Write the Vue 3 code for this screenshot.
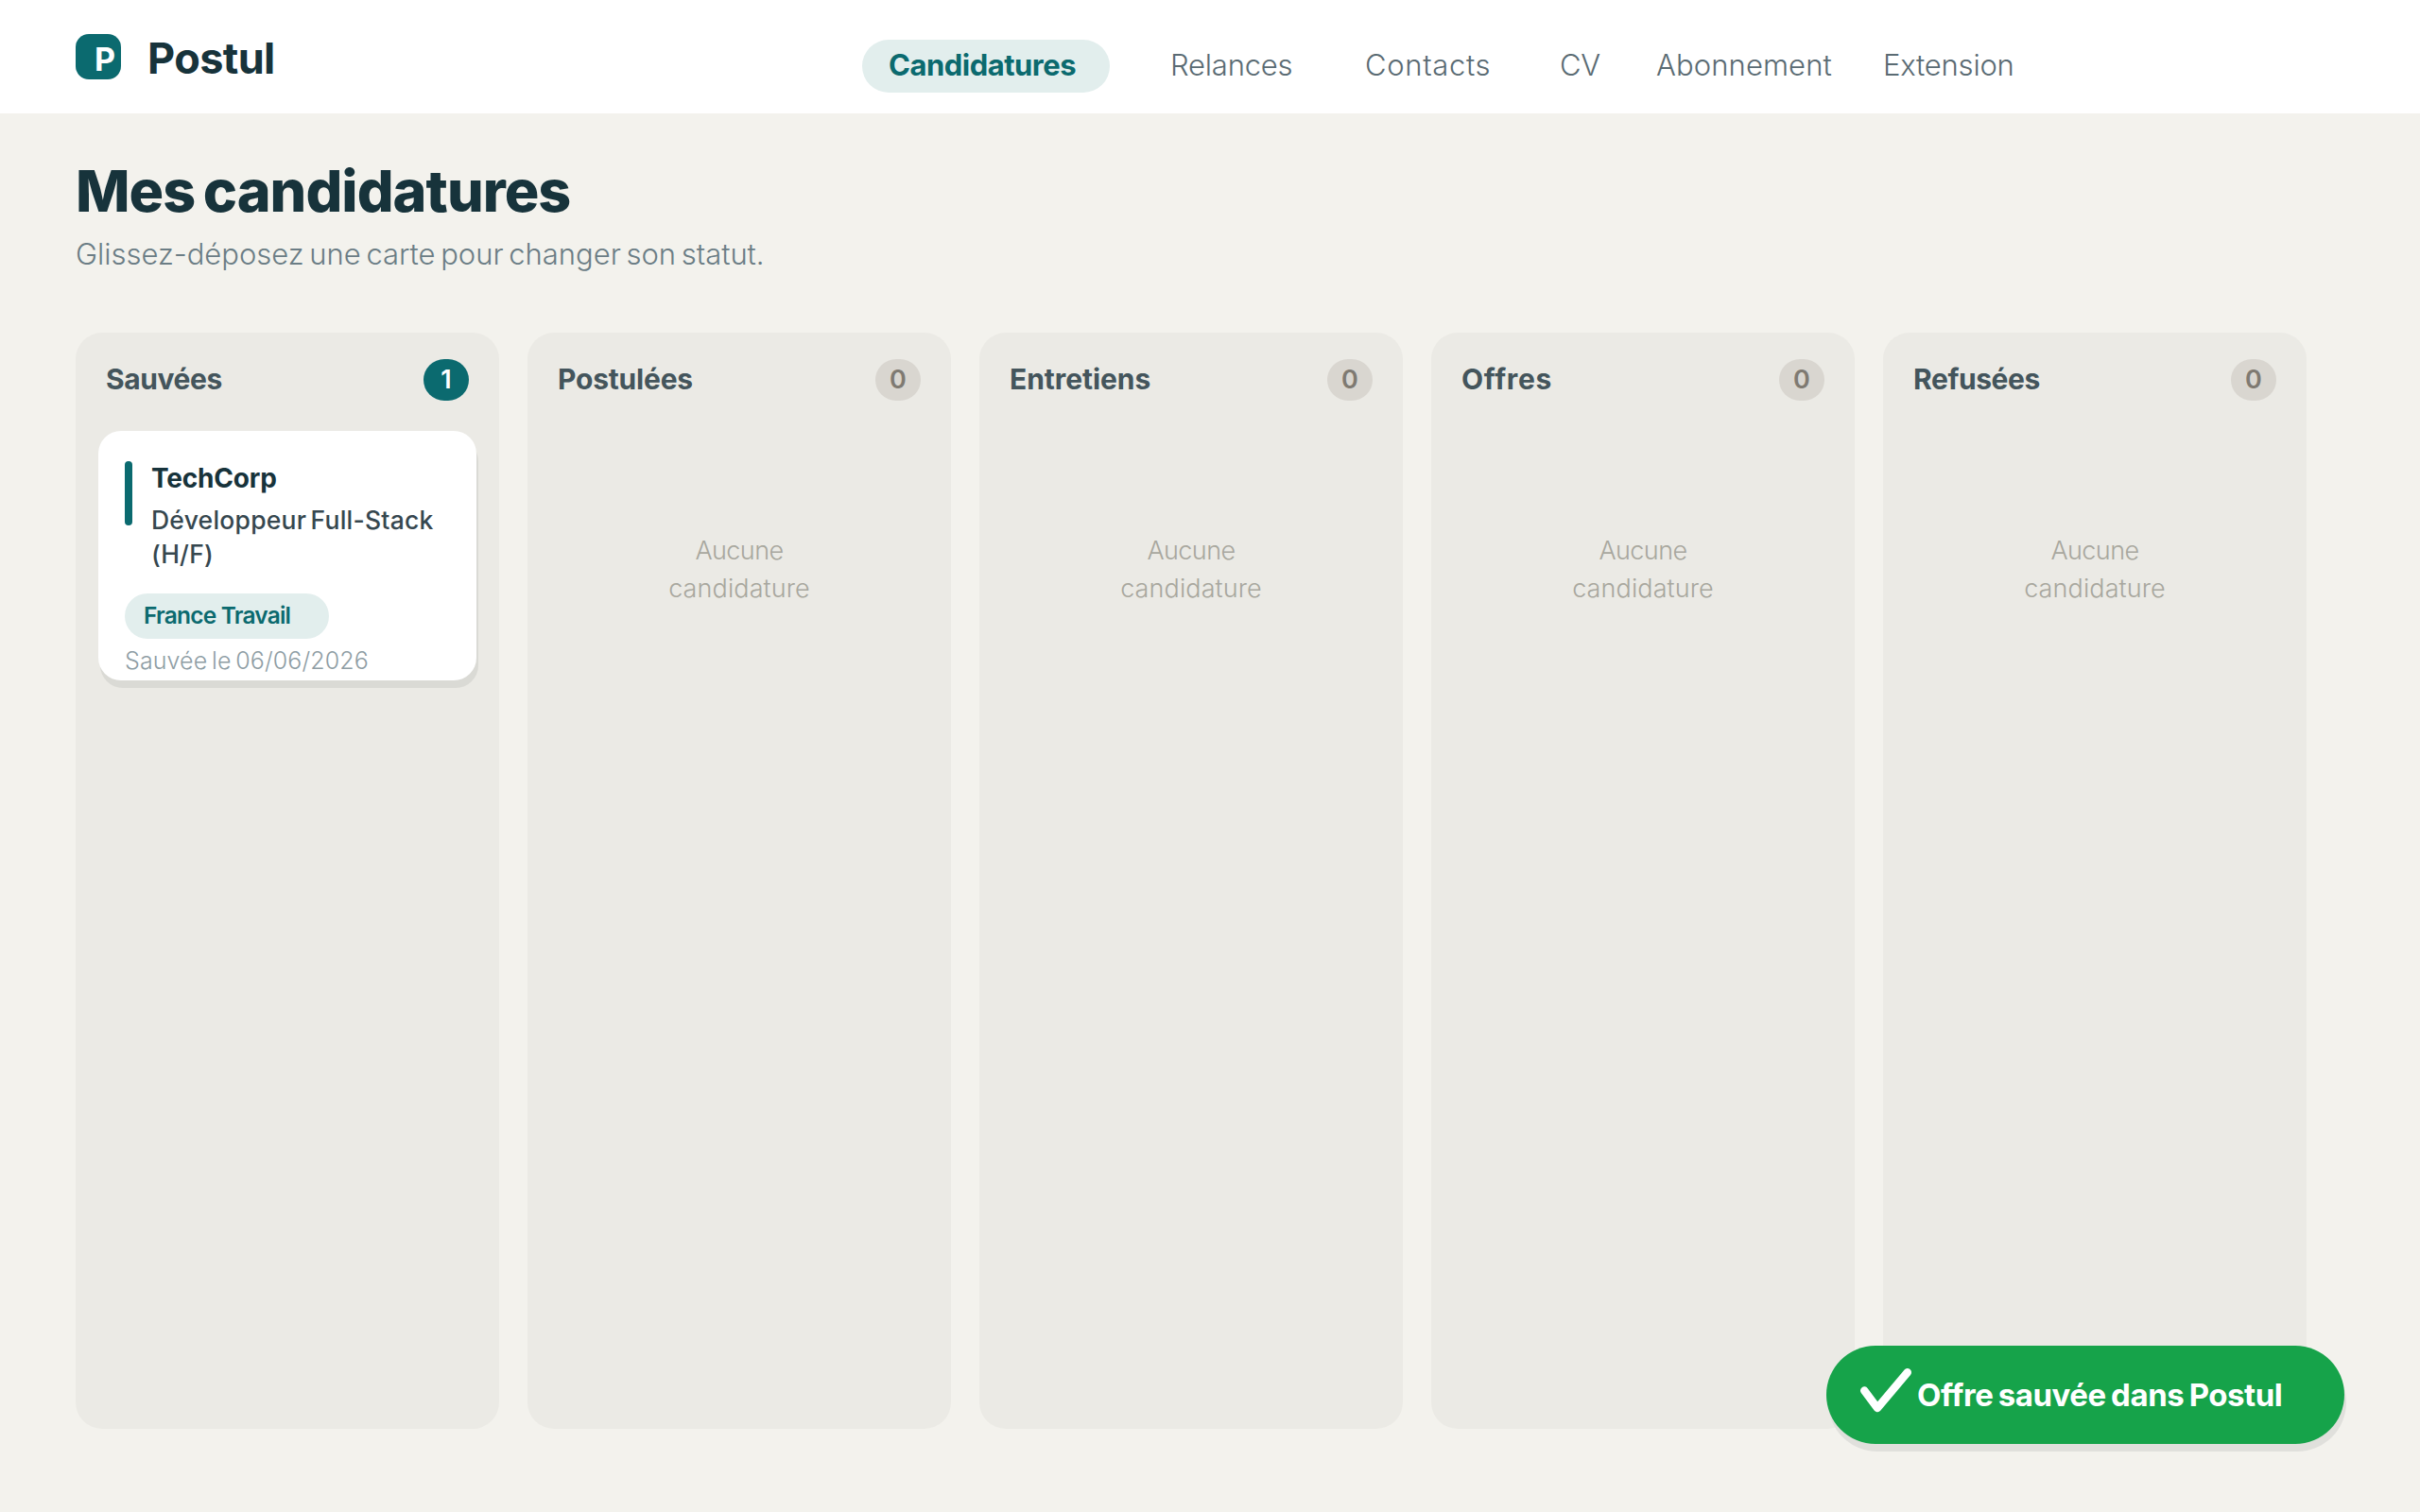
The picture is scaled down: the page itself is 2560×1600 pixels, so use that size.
<template>
  <div class="app">
    <header class="topbar">
      <div class="brand">
        <span class="brand-logo">P</span>
        <span class="brand-name">Postul</span>
      </div>
      <nav class="nav">
        <a v-for="link in links" :key="link.id" class="nav-link" :class="[link.id, { active: link.id === current }]" @click="current = link.id">{{ link.label }}</a>
      </nav>
    </header>

    <main class="content">
      <h1 class="title">Mes candidatures</h1>
      <p class="subtitle">Glissez-déposez une carte pour changer son statut.</p>

      <div class="board">
        <section v-for="column in columns" :key="column.id" class="column">
          <div class="column-head">
            <h2 class="column-title" :class="column.id">{{ column.label }}</h2>
            <span class="count" :class="{ filled: column.cards.length > 0 }">{{ column.cards.length }}</span>
          </div>
          <article v-for="card in column.cards" :key="card.company" class="card">
            <div class="card-main">
              <span class="card-bar"></span>
              <div>
                <div class="card-company">{{ card.company }}</div>
                <div class="card-role">{{ card.role }}</div>
              </div>
            </div>
            <span class="card-source">{{ card.source }}</span>
            <div class="card-date">Sauvée le {{ card.savedAt }}</div>
          </article>
          <p v-if="column.cards.length === 0" class="empty">Aucune<br><span class="empty-word">candidature</span></p>
        </section>
      </div>
    </main>

    <div class="toast">
      <svg class="toast-icon" width="56" height="50" viewBox="0 0 56 50">
        <path d="M5.2 25.5 L19 44 L50.8 6.2" fill="none" stroke="#fff" stroke-width="8.4" stroke-linecap="round" stroke-linejoin="round" />
      </svg>
      <span class="toast-text">Offre sauvée dans Postul</span>
    </div>
  </div>
</template>

<script setup>
import { ref } from "vue";

const current = ref("candidatures");

const links = [
  { id: "candidatures", label: "Candidatures" },
  { id: "relances", label: "Relances" },
  { id: "contacts", label: "Contacts" },
  { id: "cv", label: "CV" },
  { id: "abonnement", label: "Abonnement" },
  { id: "extension", label: "Extension" },
];

const columns = ref([
  {
    id: "sauvees",
    label: "Sauvées",
    cards: [
      {
        company: "TechCorp",
        role: "Développeur Full-Stack (H/F)",
        source: "France Travail",
        savedAt: "06/06/2026",
      },
    ],
  },
  { id: "postulees", label: "Postulées", cards: [] },
  { id: "entretiens", label: "Entretiens", cards: [] },
  { id: "offres", label: "Offres", cards: [] },
  { id: "refusees", label: "Refusées", cards: [] },
]);
</script>

<style>
body {
  margin: 0;
  background: #f3f2ed;
}
</style>

<style scoped>
.app {
  width: 2560px;
  height: 1600px;
  overflow: hidden;
  background: #f3f2ed;
  font-family: Inter, "Liberation Sans", sans-serif;
  color: #17333b;
}

.topbar {
  display: flex;
  align-items: flex-start;
  box-sizing: border-box;
  height: 120px;
  padding-left: 80px;
  background: #fff;
}

.brand {
  display: flex;
  align-items: flex-start;
  gap: 28px;
  width: 832px;
  padding-top: 36px;
}

.brand-logo {
  box-sizing: border-box;
  width: 48px;
  height: 48px;
  padding-left: 20px;
  border-radius: 14px;
  background: #0b6a6f;
  color: #fff;
  font-size: 34px;
  font-weight: 650;
  line-height: 54px;
}

.brand-name {
  font-size: 45px;
  font-weight: 700;
  line-height: 51px;
  letter-spacing: -0.6px;
}

.nav {
  display: grid;
  grid-template-columns: 326px 206px 206px 102px 240px 200px;
  padding-top: 42px;
}

.nav-link {
  height: 56px;
  color: #5a6b73;
  font-size: 31px;
  font-weight: 350;
  line-height: 53px;
  letter-spacing: -0.2px;
  white-space: nowrap;
  cursor: pointer;
}

.nav-link.contacts {
  letter-spacing: 0.65px;
}

.nav-link.abonnement {
  letter-spacing: 0.1px;
}

.nav-link.active {
  box-sizing: border-box;
  width: 262px;
  padding-left: 28px;
  border-radius: 28px;
  background: #e2eeed;
  color: #0b6a6f;
  font-weight: 700;
  letter-spacing: -0.5px;
}

.content {
  padding: 42px 120px 0 80px;
}

.title {
  margin: 0;
  font-size: 61px;
  font-weight: 800;
  line-height: 80px;
  letter-spacing: -0.95px;
  word-spacing: -4px;
}

.subtitle {
  margin: 3px 0 59px;
  color: #6b7d85;
  font-size: 31px;
  font-weight: 350;
  line-height: 48px;
  letter-spacing: -0.02px;
  word-spacing: -3px;
}

.board {
  display: grid;
  grid-template-columns: repeat(5, 448px);
  gap: 30px;
  height: 1160px;
}

.column {
  box-sizing: border-box;
  padding: 28px 24px;
  border-radius: 28px;
  background: #ebeae5;
}

.column-head {
  display: flex;
  justify-content: space-between;
  height: 44px;
  padding: 0 8px;
}

.column-title {
  margin: 0;
  color: #44555c;
  font-size: 30px;
  font-weight: 700;
  line-height: 42px;
  letter-spacing: -0.4px;
}

.column-title.postulees {
  letter-spacing: -0.2px;
}

.column-title.entretiens {
  letter-spacing: -0.05px;
}

.column-title.offres {
  letter-spacing: 0.7px;
}

.count {
  width: 48px;
  height: 44px;
  border-radius: 22px;
  background: #d9d6d0;
  color: #7f7a72;
  font-size: 27px;
  font-weight: 600;
  line-height: 44px;
  text-align: center;
}

.count.filled {
  background: #0b6a6f;
  color: #fff;
}

.card {
  box-sizing: border-box;
  height: 264px;
  margin-top: 32px;
  padding: 32px 28px 0;
  border-radius: 24px;
  background: #fff;
  box-shadow: 2px 8px 0 #dadad5;
}

.card-main {
  display: flex;
  gap: 20px;
}

.card-bar {
  flex: none;
  width: 8px;
  height: 68px;
  border-radius: 4px;
  background: #0b6a6f;
}

.card-company {
  font-size: 28px;
  font-weight: 700;
  line-height: 36px;
  letter-spacing: -0.2px;
}

.card-role {
  margin-top: 8px;
  color: #36474f;
  font-size: 26.5px;
  font-weight: 500;
  line-height: 36px;
  letter-spacing: 0.23px;
  word-spacing: -3px;
}

.card-source {
  display: block;
  box-sizing: border-box;
  width: 216px;
  height: 48px;
  margin-top: 24px;
  padding-left: 20px;
  border-radius: 24px;
  background: #e2eeed;
  color: #0b6a6f;
  font-size: 24.5px;
  font-weight: 600;
  line-height: 46px;
  letter-spacing: -0.8px;
}

.card-date {
  color: #8e9da4;
  font-size: 25px;
  font-weight: 350;
  line-height: 46px;
  letter-spacing: 0.1px;
  word-spacing: -2.4px;
}

.empty {
  margin: 139px 0 0;
  color: #a8a79e;
  font-size: 27px;
  font-weight: 350;
  line-height: 40px;
  letter-spacing: -0.6px;
  text-align: center;
}

.empty-word {
  letter-spacing: 0.1px;
}

.toast {
  position: absolute;
  top: 1424px;
  left: 1932px;
  display: flex;
  box-sizing: border-box;
  width: 548px;
  height: 104px;
  padding-left: 35px;
  border-radius: 52px;
  background: #16a34a;
  box-shadow: 2px 8px 0 #e0e0dc;
}

.toast-icon {
  flex: none;
  margin-top: 22px;
}

.toast-text {
  margin-left: 5px;
  color: #fff;
  font-size: 33px;
  font-weight: 650;
  line-height: 104px;
  letter-spacing: -0.45px;
  word-spacing: -2px;
  white-space: nowrap;
}
</style>
